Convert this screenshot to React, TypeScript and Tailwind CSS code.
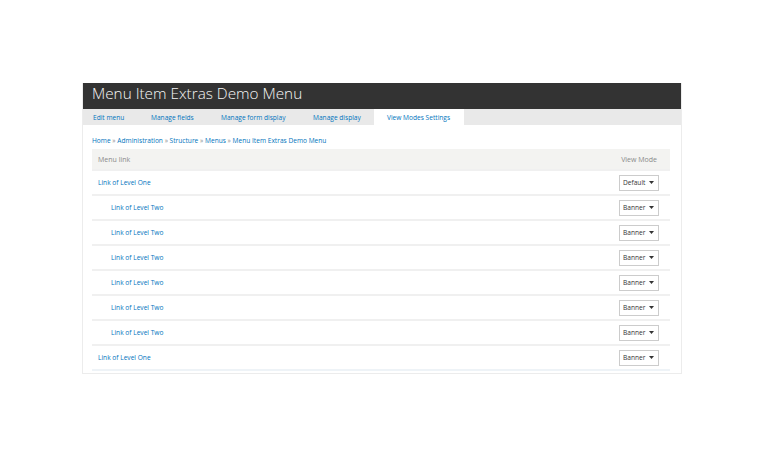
import React from 'react';

const tabs = [
  { label: 'Edit menu', cls: 'w-[59px] pl-[10px]' },
  { label: 'Manage fields', cls: 'w-[70px] pl-[9px]' },
  { label: 'Manage form display', cls: 'w-[92px] pl-[9px]' },
  { label: 'Manage display', cls: 'w-[70px] pl-[9px]' },
  { label: 'View Modes Settings', cls: 'w-[90px] pl-[13px] bg-white', active: true },
];

const rows = [
  { label: 'Link of Level One', level: 1, mode: 'Default' },
  { label: 'Link of Level Two', level: 2, mode: 'Banner' },
  { label: 'Link of Level Two', level: 2, mode: 'Banner' },
  { label: 'Link of Level Two', level: 2, mode: 'Banner' },
  { label: 'Link of Level Two', level: 2, mode: 'Banner' },
  { label: 'Link of Level Two', level: 2, mode: 'Banner' },
  { label: 'Link of Level Two', level: 2, mode: 'Banner' },
  { label: 'Link of Level One', level: 1, mode: 'Banner' },
];

const App: React.FC = () => {
  return (
    <div className="w-[760px] h-[456px] bg-white pt-[83px] pl-[82px] font-['Open_Sans',sans-serif]">
      <div className="w-[600px] h-[291px] border border-t-0 border-[#ececec] overflow-hidden flex flex-col">
        {/* Title bar */}
        <div className="h-[26px] bg-[#333333] flex items-center pl-[9px] pb-[5px]">
          <h1 className="text-[15.3px] font-light text-[#f5f5f5] leading-none">Menu Item Extras Demo Menu</h1>
        </div>

        {/* Tabs */}
        <div className="h-[17px] bg-[#e9e9e9] flex text-[6.6px] text-[#0074bd]">
          {tabs.map((t) => (
            <span key={t.label} className={`${t.cls} flex items-center pt-[3px]`}>{t.label}</span>
          ))}
        </div>

        {/* Breadcrumb */}
        <div className="pl-[9px] pt-[13px] h-[24px] text-[6.6px] text-[#0074bd] leading-none">
          Home <span className="text-[#888]">»</span> Administration <span className="text-[#888]">»</span> Structure{' '}
          <span className="text-[#888]">»</span> Menus <span className="text-[#888]">»</span> Menu Item Extras Demo Menu
        </div>

        {/* Table */}
        <div className="mx-[9px] w-[578px]">
          <div className="h-[20px] bg-[#f3f3f1] flex items-center justify-between px-[6px] pt-[2px] text-[7px] text-[#8a8a8a]">
            <span>Menu link</span>
            <span className="pr-[7px]">View Mode</span>
          </div>
          {rows.map((row, i) => (
            <div key={i} className="h-[25px] border-t-2 border-[#f0f0f0] flex items-center justify-between">
              <span className={`text-[6.6px] text-[#0074bd] ${row.level === 1 ? 'pl-[6px]' : 'pl-[19px]'}`}>{row.label}</span>
              <span className="mr-[11px] w-[40px] h-[16px] border border-[#cccccc] bg-white flex items-center justify-between pl-[3px] pr-[4px] text-[6.6px] text-[#333]">
                {row.mode}
                <svg width="5" height="3" viewBox="0 0 5 3"><path d="M0 0h5L2.5 3z" fill="#333" /></svg>
              </span>
            </div>
          ))}
          <div className="h-[4px] border-t-2 border-[#eef3f7]" />
        </div>
      </div>
    </div>
  );
};

export default App;
